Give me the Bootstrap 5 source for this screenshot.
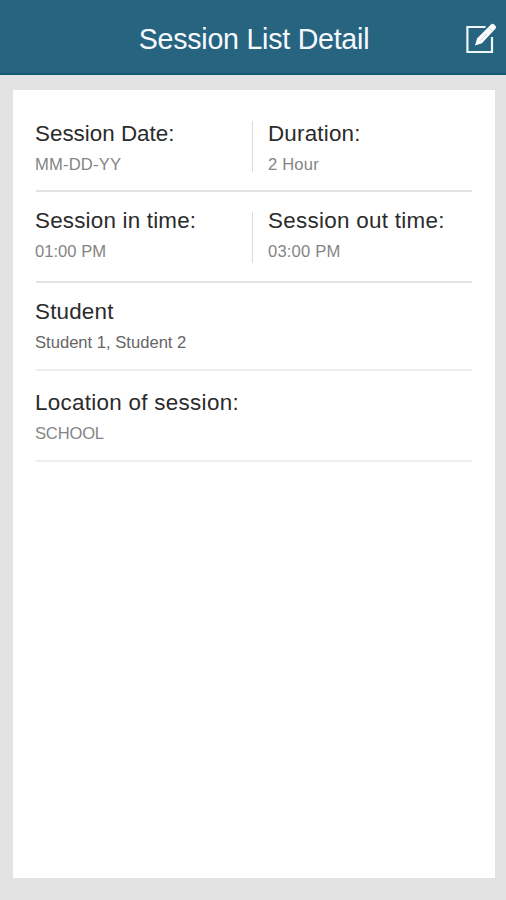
<!DOCTYPE html>
<html lang="en">
<head>
<meta charset="utf-8">
<meta name="viewport" content="width=device-width, initial-scale=1">
<title>Session List Detail</title>
<link href="https://cdn.jsdelivr.net/npm/bootstrap@5.3.0/dist/css/bootstrap.min.css" rel="stylesheet">
<style>
body{background:#e3e3e3;font-family:"Liberation Sans",Arial,sans-serif;height:900px;overflow:hidden}
.topbar{height:75px;background:#27647f;border-bottom:2px solid #155a74}
.topbar h1{font-size:28.6px;letter-spacing:-.25px;line-height:34px;color:#f6faff;padding-left:2px;padding-top:4px}
.side{width:50px}
.sheet{margin:15px 11px 0 13px;height:788px;padding:0 23px 0 22px}
.entry{border-bottom:2px solid #e2e2e2;margin-left:1px}
.entry.soft{border-color:#ededed}
.entry-a{height:102px;padding-top:29px}
.entry-b{height:91px;padding-top:14px}
.entry-c{height:88px;padding-top:14px}
.entry-d{height:91px;padding-top:17px}
.field{margin-left:-1px}
.first{width:217px}
.field dt{font-size:22.4px;line-height:30px;font-weight:400;color:#2b2b2b;letter-spacing:.2px;white-space:nowrap}
.field dt.snug{letter-spacing:0}
.field dt.airy{letter-spacing:.3px}
.field dd{font-size:16.6px;line-height:24px;margin:4px 0 0;color:#858585}
.field dd.wide{letter-spacing:.18px}
.field dd.tight{letter-spacing:-.2px}
.field dd.dark{color:#666}
.rule{width:1px;height:51px;background:#dadada;margin:2px 15px 0 0}
.entry-b .rule{margin-top:6px}
</style>
</head>
<body>
<header class="topbar d-flex align-items-center">
  <div class="side"></div>
  <h1 class="flex-grow-1 text-center fw-normal m-0">Session List Detail</h1>
  <div class="side">
    <svg class="d-block ms-2" width="40" height="36" viewBox="464 19 40 36" fill="none" aria-label="Edit">
      <path d="M485.5 27H467.4V52H492V37" stroke="#eef6f9" stroke-width="2.2"/>
      <path d="M475 45.6l2.2-7.4 13.8-13.8a2.2 2.2 0 0 1 3.1 0l1.3 1.3a2.2 2.2 0 0 1 0 3.1L481.9 43.2z" fill="#fff"/>
      <path d="M480 40.8l7-7M488.6 27.4l3.6 3.6" stroke="#9dbac6" stroke-width=".7"/>
    </svg>
  </div>
</header>
<main class="sheet bg-white">
  <section class="entry entry-a d-flex align-items-start">
    <dl class="field first mb-0"><dt class="snug">Session Date:</dt><dd class="wide">MM-DD-YY</dd></dl>
    <div class="rule"></div>
    <dl class="field ms-0 mb-0"><dt>Duration:</dt><dd class="wide">2 Hour</dd></dl>
  </section>
  <section class="entry entry-b d-flex align-items-start">
    <dl class="field first mb-0"><dt>Session in time:</dt><dd>01:00 PM</dd></dl>
    <div class="rule"></div>
    <dl class="field ms-0 mb-0"><dt class="airy">Session out time:</dt><dd class="wide">03:00 PM</dd></dl>
  </section>
  <section class="entry entry-c soft">
    <dl class="field mb-0"><dt>Student</dt><dd class="dark">Student 1, Student 2</dd></dl>
  </section>
  <section class="entry entry-d soft">
    <dl class="field mb-0"><dt class="airy">Location of session:</dt><dd class="tight">SCHOOL</dd></dl>
  </section>
</main>
<script src="https://cdn.jsdelivr.net/npm/bootstrap@5.3.0/dist/js/bootstrap.bundle.min.js"></script>
</body>
</html>
